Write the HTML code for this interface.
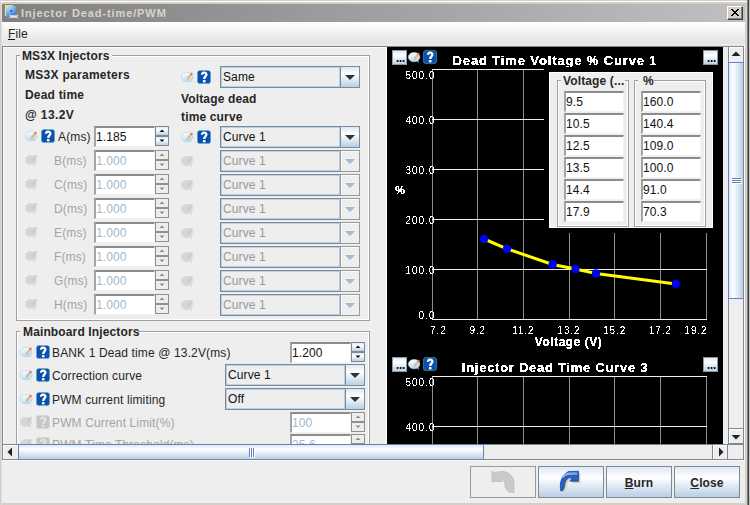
<!DOCTYPE html><html><head><meta charset="utf-8"><style>
*{box-sizing:border-box;margin:0;padding:0}
html,body{width:750px;height:505px;overflow:hidden;background:#d4d0c8;font-family:"Liberation Sans",sans-serif;position:relative}
.a{position:absolute}
.t{position:absolute;font-size:12px;line-height:14px;white-space:nowrap;color:#262626;letter-spacing:0.13px}
.b{font-weight:bold}
.fld{position:absolute;background:#fff;border-top:2px solid #8c8c8c;border-left:2px solid #a4a4a4;border-bottom:1px solid #f2f2f2;border-right:1px solid #f2f2f2;height:21px;width:61px}
.fld span{position:absolute;left:0px;top:2px;letter-spacing:0.1px;font-size:12px;line-height:14px;color:#111}
.fld.d span{color:#a3b8cc}
.spb{position:absolute;width:14px;height:10px;border:1px solid #7a8a99;background:linear-gradient(#dde8f3,#ffffff 35%,#b8cfe5)}
.spb.d{border-color:#909090;background:#eeeeee}
.cmb{position:absolute;width:140px;height:22px}
.cmb .in{position:absolute;left:0;top:0;width:121px;height:22px;border:1px solid #7a8a99;box-shadow:inset 0 0 0 1px #b8cfe5;background:#eeeeee}
.cmb .bt{position:absolute;left:120px;top:0;width:20px;height:22px;border:1px solid #7a8a99;background:linear-gradient(#dde8f3,#ffffff 35%,#b8cfe5)}
.cmb span{position:absolute;left:3px;top:4px;font-size:12px;line-height:14px;color:#111;letter-spacing:0.1px}
.cmb.d .bt{border-color:#999999;background:#eeeeee;box-shadow:inset 1px 1px 0 #fafafa}
.cmb.d span{color:#999}
.grp{position:absolute;border:1px solid #a0a0a0}
.grp:after{content:"";position:absolute;left:0;top:0;right:0;bottom:0;border:1px solid #fff}
.btnb{position:absolute;top:466px;width:66px;height:32px;border:1px solid #7a8a99;background:linear-gradient(#dde8f3,#ffffff 35%,#b8cfe5)}
.ct{position:absolute;font-size:10px;line-height:12px;white-space:nowrap;color:#fff}
</style></head><body>
<div class="a" style="left:0;top:1px;width:747px;height:1px;background:#fff"></div>
<div class="a" style="left:1px;top:2px;width:1px;height:503px;background:#e0ddd6"></div>
<div class="a" style="left:747px;top:0;width:1px;height:505px;background:#808080"></div>
<div class="a" style="left:748px;top:0;width:1px;height:505px;background:#404040"></div>
<div class="a" style="left:749px;top:0;width:1px;height:505px;background:#c4c4c4"></div>
<div class="a" style="left:2px;top:4px;width:743px;height:18px;background:linear-gradient(to right,#808080,#c0c0c0)"></div>
<svg class="a" style="left:4px;top:4px" width="17" height="17" viewBox="0 0 17 17">
<defs><linearGradient id="gic" x1="0" y1="0" x2="0.6" y2="1"><stop offset="0" stop-color="#d8ecfc"/><stop offset="0.5" stop-color="#7ab4ec"/><stop offset="1" stop-color="#2a78d8"/></linearGradient></defs>
<path d="M1.5 12 L1.5 1.5 L9 1.5" fill="none" stroke="#f0dc98" stroke-width="1.2"/>
<rect x="2.2" y="2.2" width="9.5" height="11" fill="url(#gic)"/>
<rect x="6.4" y="6" width="1.6" height="1.8" fill="#1a5cb8"/>
<path d="M6 11.8 L13 11.8 M6 13.2 L13 13.2" stroke="#e8e8e8" stroke-width="1.3"/>
<path d="M5.5 10.6 L6.3 12.5 L5.5 14.5 M14 10.6 L13.2 12.5 L14 14.5" stroke="#c8c8c8" stroke-width="1.1" fill="none"/>
</svg>
<div class="t b" style="left:21px;top:6px;font-size:11px;color:#d8d4cc;letter-spacing:0.9px">Injector Dead-time/PWM</div>
<div class="a" style="left:727px;top:6px;width:16px;height:14px;background:#d4d0c8;border-top:1px solid #fff;border-left:1px solid #fff;border-right:1px solid #404040;border-bottom:1px solid #404040"></div>
<div class="a" style="left:728px;top:7px;width:14px;height:12px;border-right:1px solid #808080;border-bottom:1px solid #808080"></div>
<svg class="a" style="left:731px;top:9px" width="8" height="7" viewBox="0 0 8 7" shape-rendering="crispEdges" fill="#000"><rect x="0" y="0" width="1" height="1"/><rect x="1" y="0" width="1" height="1"/><rect x="6" y="0" width="1" height="1"/><rect x="7" y="0" width="1" height="1"/><rect x="1" y="1" width="1" height="1"/><rect x="2" y="1" width="1" height="1"/><rect x="5" y="1" width="1" height="1"/><rect x="6" y="1" width="1" height="1"/><rect x="2" y="2" width="1" height="1"/><rect x="3" y="2" width="1" height="1"/><rect x="4" y="2" width="1" height="1"/><rect x="5" y="2" width="1" height="1"/><rect x="3" y="3" width="1" height="1"/><rect x="4" y="3" width="1" height="1"/><rect x="2" y="4" width="1" height="1"/><rect x="3" y="4" width="1" height="1"/><rect x="4" y="4" width="1" height="1"/><rect x="5" y="4" width="1" height="1"/><rect x="1" y="5" width="1" height="1"/><rect x="2" y="5" width="1" height="1"/><rect x="5" y="5" width="1" height="1"/><rect x="6" y="5" width="1" height="1"/><rect x="0" y="6" width="1" height="1"/><rect x="1" y="6" width="1" height="1"/><rect x="6" y="6" width="1" height="1"/><rect x="7" y="6" width="1" height="1"/></svg>
<div class="a" style="left:2px;top:22px;width:743px;height:22px;background:linear-gradient(#ffffff,#e2e2e2)"></div>
<div class="t" style="left:8px;top:27px">File</div>
<div class="a" style="left:8px;top:39px;width:7px;height:1px;background:#111"></div>
<div class="a" style="left:2px;top:44px;width:743px;height:459px;background:#eeeeee"></div>
<div class="a" style="left:2px;top:46px;width:743px;height:1px;background:#7a8a99"></div>
<div class="a" style="left:2px;top:45px;width:743px;height:1px;background:#e6e4e0"></div>
<div class="a" style="left:2px;top:46px;width:1px;height:414px;background:#7a8a99"></div>
<div class="a" style="left:3px;top:47px;width:383px;height:1px;background:#f8f8f8"></div>
<div class="a" style="left:3px;top:47px;width:1px;height:397px;background:#f8f8f8"></div>
<div class="a" style="left:2px;top:459px;width:742px;height:1px;background:#7a8a99"></div>
<div class="a" style="left:3px;top:460px;width:742px;height:1px;background:#f8f8f8"></div>
<div class="a" style="left:744px;top:45px;width:1px;height:415px;background:#f8f8f8"></div>
<div class="a" style="left:3px;top:47px;width:725px;height:397px;overflow:hidden"><div class="a" style="left:-3px;top:-47px;width:750px;height:505px">
<div class="grp" style="left:16px;top:55px;width:354px;height:266px"></div>
<div class="a" style="left:20px;top:50px;width:92px;height:12px;background:#eeeeee"></div>
<div class="t b" style="left:22px;top:49px;letter-spacing:0.1px">MS3X Injectors</div>
<div class="t b" style="left:25px;top:68px;letter-spacing:0.28px">MS3X parameters</div>
<div class="t b" style="left:25px;top:88px;letter-spacing:0.2px">Dead time</div>
<div class="t b" style="left:25px;top:108px;letter-spacing:0.4px">@ 13.2V</div>
<svg class="a" style="left:181px;top:71px" width="13" height="13" viewBox="0 0 13 13"><defs><linearGradient id="gb" x1="0.2" y1="0" x2="0.6" y2="1"><stop offset="0" stop-color="#ffffff"/><stop offset="1" stop-color="#b4daf0"/></linearGradient></defs><ellipse cx="6.1" cy="6.1" rx="5.8" ry="4.7" fill="url(#gb)" stroke="#a4d0ea" stroke-width="0.6"/><path d="M8.3 9.5 L10.9 11.9 L10.1 8.8 Z" fill="#b8dcf0"/><path d="M6.6 7.9 L9.8 3.9" stroke="#f2b455" stroke-width="2"/><path d="M9.8 3.9 L11.2 2.1" stroke="#e86878" stroke-width="2"/><path d="M6.7 7.8 L5.9 8.8" stroke="#a0a8b0" stroke-width="1"/></svg>
<svg class="a" style="left:197px;top:70px" width="14" height="14" viewBox="0 0 14 14"><rect x="0.4" y="0.4" width="13.2" height="13.2" rx="2.6" fill="#0a50ac" stroke="#5ab8c8" stroke-width="0.5"/><path d="M5 4.8 C5 2.2 9.4 1.9 9.4 4.5 C9.4 6.4 7.2 6.5 7.2 9" fill="none" stroke="#ffffff" stroke-width="2.3"/><rect x="5.9" y="10.1" width="2.6" height="2.3" fill="#ffffff"/></svg>
<div class="cmb" style="left:220px;top:66px"><div class="in"></div><div class="bt"></div><span>Same</span></div>
<svg class="a" style="left:345px;top:75px" width="10" height="5" viewBox="0 0 10 5"><path d="M0 0 L10 0 L5 5 Z" fill="#333"/></svg>
<div class="t b" style="left:181px;top:92px;letter-spacing:0.15px">Voltage dead</div>
<div class="t b" style="left:181px;top:110px;letter-spacing:0.15px">time curve</div>
<svg class="a" style="left:25px;top:130px" width="13" height="13" viewBox="0 0 13 13"><defs><linearGradient id="gb" x1="0.2" y1="0" x2="0.6" y2="1"><stop offset="0" stop-color="#ffffff"/><stop offset="1" stop-color="#b4daf0"/></linearGradient></defs><ellipse cx="6.1" cy="6.1" rx="5.8" ry="4.7" fill="url(#gb)" stroke="#a4d0ea" stroke-width="0.6"/><path d="M8.3 9.5 L10.9 11.9 L10.1 8.8 Z" fill="#b8dcf0"/><path d="M6.6 7.9 L9.8 3.9" stroke="#f2b455" stroke-width="2"/><path d="M9.8 3.9 L11.2 2.1" stroke="#e86878" stroke-width="2"/><path d="M6.7 7.8 L5.9 8.8" stroke="#a0a8b0" stroke-width="1"/></svg>
<svg class="a" style="left:41px;top:129px" width="14" height="14" viewBox="0 0 14 14"><rect x="0.4" y="0.4" width="13.2" height="13.2" rx="2.6" fill="#0a50ac" stroke="#5ab8c8" stroke-width="0.5"/><path d="M5 4.8 C5 2.2 9.4 1.9 9.4 4.5 C9.4 6.4 7.2 6.5 7.2 9" fill="none" stroke="#ffffff" stroke-width="2.3"/><rect x="5.9" y="10.1" width="2.6" height="2.3" fill="#ffffff"/></svg>
<div class="t" style="left:58px;top:130px;color:#262626">A(ms)</div>
<div class="fld" style="left:94px;top:126px;width:61px"><span>1.185</span></div>
<div class="spb" style="left:155px;top:126px"></div>
<div class="spb" style="left:155px;top:136px"></div>
<svg class="a" style="left:155px;top:126px" width="14" height="20" viewBox="0 0 14 20"><path d="M4.5 6 L7 3.5 L9.5 6 Z" fill="#111"/><path d="M4.5 13.5 L9.5 13.5 L7 16 Z" fill="#111"/></svg>
<svg class="a" style="left:181px;top:131px" width="13" height="13" viewBox="0 0 13 13"><defs><linearGradient id="gb" x1="0.2" y1="0" x2="0.6" y2="1"><stop offset="0" stop-color="#ffffff"/><stop offset="1" stop-color="#b4daf0"/></linearGradient></defs><ellipse cx="6.1" cy="6.1" rx="5.8" ry="4.7" fill="url(#gb)" stroke="#a4d0ea" stroke-width="0.6"/><path d="M8.3 9.5 L10.9 11.9 L10.1 8.8 Z" fill="#b8dcf0"/><path d="M6.6 7.9 L9.8 3.9" stroke="#f2b455" stroke-width="2"/><path d="M9.8 3.9 L11.2 2.1" stroke="#e86878" stroke-width="2"/><path d="M6.7 7.8 L5.9 8.8" stroke="#a0a8b0" stroke-width="1"/></svg>
<svg class="a" style="left:197px;top:130px" width="14" height="14" viewBox="0 0 14 14"><rect x="0.4" y="0.4" width="13.2" height="13.2" rx="2.6" fill="#0a50ac" stroke="#5ab8c8" stroke-width="0.5"/><path d="M5 4.8 C5 2.2 9.4 1.9 9.4 4.5 C9.4 6.4 7.2 6.5 7.2 9" fill="none" stroke="#ffffff" stroke-width="2.3"/><rect x="5.9" y="10.1" width="2.6" height="2.3" fill="#ffffff"/></svg>
<div class="cmb" style="left:220px;top:126px"><div class="in"></div><div class="bt"></div><span>Curve 1</span></div>
<svg class="a" style="left:345px;top:135px" width="10" height="5" viewBox="0 0 10 5"><path d="M0 0 L10 0 L5 5 Z" fill="#333"/></svg>
<svg class="a" style="left:25px;top:154px" width="13" height="13" viewBox="0 0 13 13"><ellipse cx="6" cy="6" rx="5.8" ry="5" fill="#d6d6d6"/><path d="M8.3 9.6 L11 12 L10.2 8.6 Z" fill="#d4d4d4"/><path d="M7 6.8 L10.2 2.9" stroke="#cbcbcb" stroke-width="2"/><path d="M10 3.1 L11.6 1.3" stroke="#d0d0d0" stroke-width="2.2"/></svg>
<div class="t" style="left:54px;top:154px;color:#a4a4a4">B(ms)</div>
<div class="fld d" style="left:94px;top:150px;width:61px"><span>1.000</span></div>
<div class="spb d" style="left:155px;top:150px"></div>
<div class="spb d" style="left:155px;top:160px"></div>
<svg class="a" style="left:155px;top:150px" width="14" height="20" viewBox="0 0 14 20"><path d="M4.5 6 L7 3.5 L9.5 6 Z" fill="#8a8a8a"/><path d="M4.5 13.5 L9.5 13.5 L7 16 Z" fill="#8a8a8a"/></svg>
<svg class="a" style="left:181px;top:155px" width="13" height="13" viewBox="0 0 13 13"><ellipse cx="6" cy="6" rx="5.8" ry="5" fill="#d6d6d6"/><path d="M8.3 9.6 L11 12 L10.2 8.6 Z" fill="#d4d4d4"/><path d="M7 6.8 L10.2 2.9" stroke="#cbcbcb" stroke-width="2"/><path d="M10 3.1 L11.6 1.3" stroke="#d0d0d0" stroke-width="2.2"/></svg>
<div class="cmb d" style="left:220px;top:150px"><div class="in"></div><div class="bt"></div><span>Curve 1</span></div>
<svg class="a" style="left:345px;top:159px" width="10" height="5" viewBox="0 0 10 5"><path d="M0 0 L10 0 L5 5 Z" fill="#a3b8cc"/></svg>
<svg class="a" style="left:25px;top:178px" width="13" height="13" viewBox="0 0 13 13"><ellipse cx="6" cy="6" rx="5.8" ry="5" fill="#d6d6d6"/><path d="M8.3 9.6 L11 12 L10.2 8.6 Z" fill="#d4d4d4"/><path d="M7 6.8 L10.2 2.9" stroke="#cbcbcb" stroke-width="2"/><path d="M10 3.1 L11.6 1.3" stroke="#d0d0d0" stroke-width="2.2"/></svg>
<div class="t" style="left:54px;top:178px;color:#a4a4a4">C(ms)</div>
<div class="fld d" style="left:94px;top:174px;width:61px"><span>1.000</span></div>
<div class="spb d" style="left:155px;top:174px"></div>
<div class="spb d" style="left:155px;top:184px"></div>
<svg class="a" style="left:155px;top:174px" width="14" height="20" viewBox="0 0 14 20"><path d="M4.5 6 L7 3.5 L9.5 6 Z" fill="#8a8a8a"/><path d="M4.5 13.5 L9.5 13.5 L7 16 Z" fill="#8a8a8a"/></svg>
<svg class="a" style="left:181px;top:179px" width="13" height="13" viewBox="0 0 13 13"><ellipse cx="6" cy="6" rx="5.8" ry="5" fill="#d6d6d6"/><path d="M8.3 9.6 L11 12 L10.2 8.6 Z" fill="#d4d4d4"/><path d="M7 6.8 L10.2 2.9" stroke="#cbcbcb" stroke-width="2"/><path d="M10 3.1 L11.6 1.3" stroke="#d0d0d0" stroke-width="2.2"/></svg>
<div class="cmb d" style="left:220px;top:174px"><div class="in"></div><div class="bt"></div><span>Curve 1</span></div>
<svg class="a" style="left:345px;top:183px" width="10" height="5" viewBox="0 0 10 5"><path d="M0 0 L10 0 L5 5 Z" fill="#a3b8cc"/></svg>
<svg class="a" style="left:25px;top:202px" width="13" height="13" viewBox="0 0 13 13"><ellipse cx="6" cy="6" rx="5.8" ry="5" fill="#d6d6d6"/><path d="M8.3 9.6 L11 12 L10.2 8.6 Z" fill="#d4d4d4"/><path d="M7 6.8 L10.2 2.9" stroke="#cbcbcb" stroke-width="2"/><path d="M10 3.1 L11.6 1.3" stroke="#d0d0d0" stroke-width="2.2"/></svg>
<div class="t" style="left:54px;top:202px;color:#a4a4a4">D(ms)</div>
<div class="fld d" style="left:94px;top:198px;width:61px"><span>1.000</span></div>
<div class="spb d" style="left:155px;top:198px"></div>
<div class="spb d" style="left:155px;top:208px"></div>
<svg class="a" style="left:155px;top:198px" width="14" height="20" viewBox="0 0 14 20"><path d="M4.5 6 L7 3.5 L9.5 6 Z" fill="#8a8a8a"/><path d="M4.5 13.5 L9.5 13.5 L7 16 Z" fill="#8a8a8a"/></svg>
<svg class="a" style="left:181px;top:203px" width="13" height="13" viewBox="0 0 13 13"><ellipse cx="6" cy="6" rx="5.8" ry="5" fill="#d6d6d6"/><path d="M8.3 9.6 L11 12 L10.2 8.6 Z" fill="#d4d4d4"/><path d="M7 6.8 L10.2 2.9" stroke="#cbcbcb" stroke-width="2"/><path d="M10 3.1 L11.6 1.3" stroke="#d0d0d0" stroke-width="2.2"/></svg>
<div class="cmb d" style="left:220px;top:198px"><div class="in"></div><div class="bt"></div><span>Curve 1</span></div>
<svg class="a" style="left:345px;top:207px" width="10" height="5" viewBox="0 0 10 5"><path d="M0 0 L10 0 L5 5 Z" fill="#a3b8cc"/></svg>
<svg class="a" style="left:25px;top:226px" width="13" height="13" viewBox="0 0 13 13"><ellipse cx="6" cy="6" rx="5.8" ry="5" fill="#d6d6d6"/><path d="M8.3 9.6 L11 12 L10.2 8.6 Z" fill="#d4d4d4"/><path d="M7 6.8 L10.2 2.9" stroke="#cbcbcb" stroke-width="2"/><path d="M10 3.1 L11.6 1.3" stroke="#d0d0d0" stroke-width="2.2"/></svg>
<div class="t" style="left:54px;top:226px;color:#a4a4a4">E(ms)</div>
<div class="fld d" style="left:94px;top:222px;width:61px"><span>1.000</span></div>
<div class="spb d" style="left:155px;top:222px"></div>
<div class="spb d" style="left:155px;top:232px"></div>
<svg class="a" style="left:155px;top:222px" width="14" height="20" viewBox="0 0 14 20"><path d="M4.5 6 L7 3.5 L9.5 6 Z" fill="#8a8a8a"/><path d="M4.5 13.5 L9.5 13.5 L7 16 Z" fill="#8a8a8a"/></svg>
<svg class="a" style="left:181px;top:227px" width="13" height="13" viewBox="0 0 13 13"><ellipse cx="6" cy="6" rx="5.8" ry="5" fill="#d6d6d6"/><path d="M8.3 9.6 L11 12 L10.2 8.6 Z" fill="#d4d4d4"/><path d="M7 6.8 L10.2 2.9" stroke="#cbcbcb" stroke-width="2"/><path d="M10 3.1 L11.6 1.3" stroke="#d0d0d0" stroke-width="2.2"/></svg>
<div class="cmb d" style="left:220px;top:222px"><div class="in"></div><div class="bt"></div><span>Curve 1</span></div>
<svg class="a" style="left:345px;top:231px" width="10" height="5" viewBox="0 0 10 5"><path d="M0 0 L10 0 L5 5 Z" fill="#a3b8cc"/></svg>
<svg class="a" style="left:25px;top:250px" width="13" height="13" viewBox="0 0 13 13"><ellipse cx="6" cy="6" rx="5.8" ry="5" fill="#d6d6d6"/><path d="M8.3 9.6 L11 12 L10.2 8.6 Z" fill="#d4d4d4"/><path d="M7 6.8 L10.2 2.9" stroke="#cbcbcb" stroke-width="2"/><path d="M10 3.1 L11.6 1.3" stroke="#d0d0d0" stroke-width="2.2"/></svg>
<div class="t" style="left:54px;top:250px;color:#a4a4a4">F(ms)</div>
<div class="fld d" style="left:94px;top:246px;width:61px"><span>1.000</span></div>
<div class="spb d" style="left:155px;top:246px"></div>
<div class="spb d" style="left:155px;top:256px"></div>
<svg class="a" style="left:155px;top:246px" width="14" height="20" viewBox="0 0 14 20"><path d="M4.5 6 L7 3.5 L9.5 6 Z" fill="#8a8a8a"/><path d="M4.5 13.5 L9.5 13.5 L7 16 Z" fill="#8a8a8a"/></svg>
<svg class="a" style="left:181px;top:251px" width="13" height="13" viewBox="0 0 13 13"><ellipse cx="6" cy="6" rx="5.8" ry="5" fill="#d6d6d6"/><path d="M8.3 9.6 L11 12 L10.2 8.6 Z" fill="#d4d4d4"/><path d="M7 6.8 L10.2 2.9" stroke="#cbcbcb" stroke-width="2"/><path d="M10 3.1 L11.6 1.3" stroke="#d0d0d0" stroke-width="2.2"/></svg>
<div class="cmb d" style="left:220px;top:246px"><div class="in"></div><div class="bt"></div><span>Curve 1</span></div>
<svg class="a" style="left:345px;top:255px" width="10" height="5" viewBox="0 0 10 5"><path d="M0 0 L10 0 L5 5 Z" fill="#a3b8cc"/></svg>
<svg class="a" style="left:25px;top:274px" width="13" height="13" viewBox="0 0 13 13"><ellipse cx="6" cy="6" rx="5.8" ry="5" fill="#d6d6d6"/><path d="M8.3 9.6 L11 12 L10.2 8.6 Z" fill="#d4d4d4"/><path d="M7 6.8 L10.2 2.9" stroke="#cbcbcb" stroke-width="2"/><path d="M10 3.1 L11.6 1.3" stroke="#d0d0d0" stroke-width="2.2"/></svg>
<div class="t" style="left:54px;top:274px;color:#a4a4a4">G(ms)</div>
<div class="fld d" style="left:94px;top:270px;width:61px"><span>1.000</span></div>
<div class="spb d" style="left:155px;top:270px"></div>
<div class="spb d" style="left:155px;top:280px"></div>
<svg class="a" style="left:155px;top:270px" width="14" height="20" viewBox="0 0 14 20"><path d="M4.5 6 L7 3.5 L9.5 6 Z" fill="#8a8a8a"/><path d="M4.5 13.5 L9.5 13.5 L7 16 Z" fill="#8a8a8a"/></svg>
<svg class="a" style="left:181px;top:275px" width="13" height="13" viewBox="0 0 13 13"><ellipse cx="6" cy="6" rx="5.8" ry="5" fill="#d6d6d6"/><path d="M8.3 9.6 L11 12 L10.2 8.6 Z" fill="#d4d4d4"/><path d="M7 6.8 L10.2 2.9" stroke="#cbcbcb" stroke-width="2"/><path d="M10 3.1 L11.6 1.3" stroke="#d0d0d0" stroke-width="2.2"/></svg>
<div class="cmb d" style="left:220px;top:270px"><div class="in"></div><div class="bt"></div><span>Curve 1</span></div>
<svg class="a" style="left:345px;top:279px" width="10" height="5" viewBox="0 0 10 5"><path d="M0 0 L10 0 L5 5 Z" fill="#a3b8cc"/></svg>
<svg class="a" style="left:25px;top:298px" width="13" height="13" viewBox="0 0 13 13"><ellipse cx="6" cy="6" rx="5.8" ry="5" fill="#d6d6d6"/><path d="M8.3 9.6 L11 12 L10.2 8.6 Z" fill="#d4d4d4"/><path d="M7 6.8 L10.2 2.9" stroke="#cbcbcb" stroke-width="2"/><path d="M10 3.1 L11.6 1.3" stroke="#d0d0d0" stroke-width="2.2"/></svg>
<div class="t" style="left:54px;top:298px;color:#a4a4a4">H(ms)</div>
<div class="fld d" style="left:94px;top:294px;width:61px"><span>1.000</span></div>
<div class="spb d" style="left:155px;top:294px"></div>
<div class="spb d" style="left:155px;top:304px"></div>
<svg class="a" style="left:155px;top:294px" width="14" height="20" viewBox="0 0 14 20"><path d="M4.5 6 L7 3.5 L9.5 6 Z" fill="#8a8a8a"/><path d="M4.5 13.5 L9.5 13.5 L7 16 Z" fill="#8a8a8a"/></svg>
<svg class="a" style="left:181px;top:299px" width="13" height="13" viewBox="0 0 13 13"><ellipse cx="6" cy="6" rx="5.8" ry="5" fill="#d6d6d6"/><path d="M8.3 9.6 L11 12 L10.2 8.6 Z" fill="#d4d4d4"/><path d="M7 6.8 L10.2 2.9" stroke="#cbcbcb" stroke-width="2"/><path d="M10 3.1 L11.6 1.3" stroke="#d0d0d0" stroke-width="2.2"/></svg>
<div class="cmb d" style="left:220px;top:294px"><div class="in"></div><div class="bt"></div><span>Curve 1</span></div>
<svg class="a" style="left:345px;top:303px" width="10" height="5" viewBox="0 0 10 5"><path d="M0 0 L10 0 L5 5 Z" fill="#a3b8cc"/></svg>
<div class="grp" style="left:16px;top:331px;width:354px;height:140px"></div>
<div class="a" style="left:20px;top:326px;width:118px;height:12px;background:#eeeeee"></div>
<div class="t b" style="left:23px;top:325px;">Mainboard Injectors</div>
<svg class="a" style="left:20px;top:346px" width="13" height="13" viewBox="0 0 13 13"><defs><linearGradient id="gb" x1="0.2" y1="0" x2="0.6" y2="1"><stop offset="0" stop-color="#ffffff"/><stop offset="1" stop-color="#b4daf0"/></linearGradient></defs><ellipse cx="6.1" cy="6.1" rx="5.8" ry="4.7" fill="url(#gb)" stroke="#a4d0ea" stroke-width="0.6"/><path d="M8.3 9.5 L10.9 11.9 L10.1 8.8 Z" fill="#b8dcf0"/><path d="M6.6 7.9 L9.8 3.9" stroke="#f2b455" stroke-width="2"/><path d="M9.8 3.9 L11.2 2.1" stroke="#e86878" stroke-width="2"/><path d="M6.7 7.8 L5.9 8.8" stroke="#a0a8b0" stroke-width="1"/></svg>
<svg class="a" style="left:36px;top:345px" width="14" height="14" viewBox="0 0 14 14"><rect x="0.4" y="0.4" width="13.2" height="13.2" rx="2.6" fill="#0a50ac" stroke="#5ab8c8" stroke-width="0.5"/><path d="M5 4.8 C5 2.2 9.4 1.9 9.4 4.5 C9.4 6.4 7.2 6.5 7.2 9" fill="none" stroke="#ffffff" stroke-width="2.3"/><rect x="5.9" y="10.1" width="2.6" height="2.3" fill="#ffffff"/></svg>
<div class="t " style="left:52px;top:346px;">BANK 1 Dead time @ 13.2V(ms)</div>
<div class="fld" style="left:290px;top:342px;width:61px"><span>1.200</span></div>
<div class="spb" style="left:351px;top:342px"></div>
<div class="spb" style="left:351px;top:352px"></div>
<svg class="a" style="left:351px;top:342px" width="14" height="20" viewBox="0 0 14 20"><path d="M4.5 6 L7 3.5 L9.5 6 Z" fill="#111"/><path d="M4.5 13.5 L9.5 13.5 L7 16 Z" fill="#111"/></svg>
<svg class="a" style="left:20px;top:369px" width="13" height="13" viewBox="0 0 13 13"><defs><linearGradient id="gb" x1="0.2" y1="0" x2="0.6" y2="1"><stop offset="0" stop-color="#ffffff"/><stop offset="1" stop-color="#b4daf0"/></linearGradient></defs><ellipse cx="6.1" cy="6.1" rx="5.8" ry="4.7" fill="url(#gb)" stroke="#a4d0ea" stroke-width="0.6"/><path d="M8.3 9.5 L10.9 11.9 L10.1 8.8 Z" fill="#b8dcf0"/><path d="M6.6 7.9 L9.8 3.9" stroke="#f2b455" stroke-width="2"/><path d="M9.8 3.9 L11.2 2.1" stroke="#e86878" stroke-width="2"/><path d="M6.7 7.8 L5.9 8.8" stroke="#a0a8b0" stroke-width="1"/></svg>
<svg class="a" style="left:36px;top:368px" width="14" height="14" viewBox="0 0 14 14"><rect x="0.4" y="0.4" width="13.2" height="13.2" rx="2.6" fill="#0a50ac" stroke="#5ab8c8" stroke-width="0.5"/><path d="M5 4.8 C5 2.2 9.4 1.9 9.4 4.5 C9.4 6.4 7.2 6.5 7.2 9" fill="none" stroke="#ffffff" stroke-width="2.3"/><rect x="5.9" y="10.1" width="2.6" height="2.3" fill="#ffffff"/></svg>
<div class="t " style="left:52px;top:369px;">Correction curve</div>
<div class="cmb" style="left:225px;top:364px"><div class="in"></div><div class="bt"></div><span>Curve 1</span></div>
<svg class="a" style="left:350px;top:373px" width="10" height="5" viewBox="0 0 10 5"><path d="M0 0 L10 0 L5 5 Z" fill="#333"/></svg>
<svg class="a" style="left:20px;top:393px" width="13" height="13" viewBox="0 0 13 13"><defs><linearGradient id="gb" x1="0.2" y1="0" x2="0.6" y2="1"><stop offset="0" stop-color="#ffffff"/><stop offset="1" stop-color="#b4daf0"/></linearGradient></defs><ellipse cx="6.1" cy="6.1" rx="5.8" ry="4.7" fill="url(#gb)" stroke="#a4d0ea" stroke-width="0.6"/><path d="M8.3 9.5 L10.9 11.9 L10.1 8.8 Z" fill="#b8dcf0"/><path d="M6.6 7.9 L9.8 3.9" stroke="#f2b455" stroke-width="2"/><path d="M9.8 3.9 L11.2 2.1" stroke="#e86878" stroke-width="2"/><path d="M6.7 7.8 L5.9 8.8" stroke="#a0a8b0" stroke-width="1"/></svg>
<svg class="a" style="left:36px;top:392px" width="14" height="14" viewBox="0 0 14 14"><rect x="0.4" y="0.4" width="13.2" height="13.2" rx="2.6" fill="#0a50ac" stroke="#5ab8c8" stroke-width="0.5"/><path d="M5 4.8 C5 2.2 9.4 1.9 9.4 4.5 C9.4 6.4 7.2 6.5 7.2 9" fill="none" stroke="#ffffff" stroke-width="2.3"/><rect x="5.9" y="10.1" width="2.6" height="2.3" fill="#ffffff"/></svg>
<div class="t " style="left:52px;top:393px;">PWM current limiting</div>
<div class="cmb" style="left:225px;top:388px"><div class="in"></div><div class="bt"></div><span>Off</span></div>
<svg class="a" style="left:350px;top:397px" width="10" height="5" viewBox="0 0 10 5"><path d="M0 0 L10 0 L5 5 Z" fill="#333"/></svg>
<svg class="a" style="left:20px;top:416px" width="13" height="13" viewBox="0 0 13 13"><ellipse cx="6" cy="6" rx="5.8" ry="5" fill="#d6d6d6"/><path d="M8.3 9.6 L11 12 L10.2 8.6 Z" fill="#d4d4d4"/><path d="M7 6.8 L10.2 2.9" stroke="#cbcbcb" stroke-width="2"/><path d="M10 3.1 L11.6 1.3" stroke="#d0d0d0" stroke-width="2.2"/></svg>
<svg class="a" style="left:36px;top:415px" width="14" height="14" viewBox="0 0 14 14"><rect x="0.4" y="0.4" width="13.2" height="13.2" rx="2.6" fill="#c6c6c6" stroke="#d4d4d4" stroke-width="0.5"/><path d="M5 4.8 C5 2.2 9.4 1.9 9.4 4.5 C9.4 6.4 7.2 6.5 7.2 9" fill="none" stroke="#e4e4e4" stroke-width="2.3"/><rect x="5.9" y="10.1" width="2.6" height="2.3" fill="#e4e4e4"/></svg>
<div class="t " style="left:52px;top:416px;color:#a4a4a4">PWM Current Limit(%)</div>
<div class="fld d" style="left:290px;top:412px;width:61px"><span>100</span></div>
<div class="spb d" style="left:351px;top:412px"></div>
<div class="spb d" style="left:351px;top:422px"></div>
<svg class="a" style="left:351px;top:412px" width="14" height="20" viewBox="0 0 14 20"><path d="M4.5 6 L7 3.5 L9.5 6 Z" fill="#8a8a8a"/><path d="M4.5 13.5 L9.5 13.5 L7 16 Z" fill="#8a8a8a"/></svg>
<svg class="a" style="left:20px;top:438px" width="13" height="13" viewBox="0 0 13 13"><ellipse cx="6" cy="6" rx="5.8" ry="5" fill="#d6d6d6"/><path d="M8.3 9.6 L11 12 L10.2 8.6 Z" fill="#d4d4d4"/><path d="M7 6.8 L10.2 2.9" stroke="#cbcbcb" stroke-width="2"/><path d="M10 3.1 L11.6 1.3" stroke="#d0d0d0" stroke-width="2.2"/></svg>
<svg class="a" style="left:36px;top:437px" width="14" height="14" viewBox="0 0 14 14"><rect x="0.4" y="0.4" width="13.2" height="13.2" rx="2.6" fill="#c6c6c6" stroke="#d4d4d4" stroke-width="0.5"/><path d="M5 4.8 C5 2.2 9.4 1.9 9.4 4.5 C9.4 6.4 7.2 6.5 7.2 9" fill="none" stroke="#e4e4e4" stroke-width="2.3"/><rect x="5.9" y="10.1" width="2.6" height="2.3" fill="#e4e4e4"/></svg>
<div class="t " style="left:52px;top:438px;color:#a4a4a4">PWM Time Threshold(ms)</div>
<div class="fld d" style="left:290px;top:434px;width:61px"><span>25.6</span></div>
<div class="spb d" style="left:351px;top:434px"></div>
<div class="spb d" style="left:351px;top:444px"></div>
<svg class="a" style="left:351px;top:434px" width="14" height="20" viewBox="0 0 14 20"><path d="M4.5 6 L7 3.5 L9.5 6 Z" fill="#8a8a8a"/><path d="M4.5 13.5 L9.5 13.5 L7 16 Z" fill="#8a8a8a"/></svg>
<div class="a" style="left:386px;top:47px;width:1px;height:397px;background:#fff"></div>
</div></div>
<svg class="a" style="left:387px;top:47px" width="336" height="397" viewBox="387 47 336 397"><defs><filter id="crisp" x="0" y="0" width="1" height="1"><feComponentTransfer><feFuncA type="discrete" tableValues="0 1 1"/></feComponentTransfer></filter><filter id="crisp2" x="0" y="0" width="1" height="1"><feComponentTransfer><feFuncA type="discrete" tableValues="0 1"/></feComponentTransfer></filter></defs><defs><linearGradient id="gbtn" x1="0" y1="0" x2="0" y2="1"><stop offset="0" stop-color="#dde8f3"/><stop offset="0.35" stop-color="#fff"/><stop offset="1" stop-color="#b8cfe5"/></linearGradient></defs><rect x="387" y="47" width="336" height="397" fill="#000"/><rect x="392.5" y="50.5" width="14" height="14" fill="url(#gbtn)" stroke="#8a9aa9"/><rect x="396" y="60" width="1" height="2" fill="#d8a050"/><rect x="397" y="60" width="1" height="2" fill="#101010"/><rect x="398" y="60" width="1" height="2" fill="#3c8ce8"/><rect x="399" y="60" width="1" height="2" fill="#d8a050"/><rect x="400" y="60" width="1" height="2" fill="#101010"/><rect x="401" y="60" width="1" height="2" fill="#3c8ce8"/><rect x="402" y="60" width="1" height="2" fill="#d8a050"/><rect x="403" y="60" width="1" height="2" fill="#101010"/><rect x="404" y="60" width="1" height="2" fill="#3c8ce8"/><g transform="translate(408,51)"><defs><linearGradient id="gb" x1="0.2" y1="0" x2="0.6" y2="1"><stop offset="0" stop-color="#ffffff"/><stop offset="1" stop-color="#b4daf0"/></linearGradient></defs><ellipse cx="6.1" cy="6.1" rx="5.8" ry="4.7" fill="url(#gb)" stroke="#a4d0ea" stroke-width="0.6"/><path d="M8.3 9.5 L10.9 11.9 L10.1 8.8 Z" fill="#b8dcf0"/><path d="M6.6 7.9 L9.8 3.9" stroke="#f2b455" stroke-width="2"/><path d="M9.8 3.9 L11.2 2.1" stroke="#e86878" stroke-width="2"/><path d="M6.7 7.8 L5.9 8.8" stroke="#a0a8b0" stroke-width="1"/></g><g transform="translate(423,50)"><rect x="0.4" y="0.4" width="13.2" height="13.2" rx="2.6" fill="#0a50ac" stroke="#5ab8c8" stroke-width="0.5"/><path d="M5 4.8 C5 2.2 9.4 1.9 9.4 4.5 C9.4 6.4 7.2 6.5 7.2 9" fill="none" stroke="#ffffff" stroke-width="2.3"/><rect x="5.9" y="10.1" width="2.6" height="2.3" fill="#ffffff"/></g><rect x="703.5" y="50.5" width="14" height="14" fill="url(#gbtn)" stroke="#8a9aa9"/><rect x="707" y="60" width="1" height="2" fill="#d8a050"/><rect x="708" y="60" width="1" height="2" fill="#101010"/><rect x="709" y="60" width="1" height="2" fill="#3c8ce8"/><rect x="710" y="60" width="1" height="2" fill="#d8a050"/><rect x="711" y="60" width="1" height="2" fill="#101010"/><rect x="712" y="60" width="1" height="2" fill="#3c8ce8"/><rect x="713" y="60" width="1" height="2" fill="#d8a050"/><rect x="714" y="60" width="1" height="2" fill="#101010"/><rect x="715" y="60" width="1" height="2" fill="#3c8ce8"/><text filter="url(#crisp)" x="555" y="65" text-anchor="middle" font-family="Liberation Sans" font-weight="bold" font-size="13" letter-spacing="0.86" fill="#fff">Dead Time Voltage % Curve 1</text><line x1="477.5" y1="69" x2="477.5" y2="319" stroke="#8c8c8c"/><line x1="523.5" y1="69" x2="523.5" y2="319" stroke="#8c8c8c"/><line x1="569.5" y1="69" x2="569.5" y2="319" stroke="#8c8c8c"/><line x1="614.5" y1="69" x2="614.5" y2="319" stroke="#8c8c8c"/><line x1="660.5" y1="69" x2="660.5" y2="319" stroke="#8c8c8c"/><line x1="432.5" y1="69" x2="432.5" y2="319" stroke="#8c8c8c"/><line x1="706.5" y1="69" x2="706.5" y2="319" stroke="#8c8c8c"/><line x1="432" y1="69.5" x2="707" y2="69.5" stroke="#f0f0f0"/><line x1="432" y1="119.5" x2="707" y2="119.5" stroke="#f0f0f0"/><line x1="432" y1="169.5" x2="707" y2="169.5" stroke="#f0f0f0"/><line x1="432" y1="219.5" x2="707" y2="219.5" stroke="#f0f0f0"/><line x1="432" y1="269.5" x2="707" y2="269.5" stroke="#f0f0f0"/><line x1="432" y1="319.5" x2="707" y2="319.5" stroke="#f0f0f0"/><text filter="url(#crisp2)" x="435.5" y="79.0" text-anchor="end" font-family="Liberation Sans" font-size="10" letter-spacing="1.0" fill="#fff">500.0</text><text filter="url(#crisp2)" x="435.5" y="123.5" text-anchor="end" font-family="Liberation Sans" font-size="10" letter-spacing="1.0" fill="#fff">400.0</text><text filter="url(#crisp2)" x="435.5" y="173.5" text-anchor="end" font-family="Liberation Sans" font-size="10" letter-spacing="1.0" fill="#fff">300.0</text><text filter="url(#crisp2)" x="435.5" y="223.5" text-anchor="end" font-family="Liberation Sans" font-size="10" letter-spacing="1.0" fill="#fff">200.0</text><text filter="url(#crisp2)" x="435.5" y="273.5" text-anchor="end" font-family="Liberation Sans" font-size="10" letter-spacing="1.0" fill="#fff">100.0</text><text filter="url(#crisp2)" x="435.5" y="319.0" text-anchor="end" font-family="Liberation Sans" font-size="10" letter-spacing="1.0" fill="#fff">0.0</text><text filter="url(#crisp)" x="395" y="194" font-family="Liberation Sans" font-weight="bold" font-size="11" fill="#fff">%</text><text filter="url(#crisp2)" x="430.0" y="334" text-anchor="start" font-family="Liberation Sans" font-size="10" letter-spacing="0.9" fill="#fff">7.2</text><text filter="url(#crisp2)" x="477.7" y="334" text-anchor="middle" font-family="Liberation Sans" font-size="10" letter-spacing="0.9" fill="#fff">9.2</text><text filter="url(#crisp2)" x="523.3" y="334" text-anchor="middle" font-family="Liberation Sans" font-size="10" letter-spacing="0.9" fill="#fff">11.2</text><text filter="url(#crisp2)" x="569.0" y="334" text-anchor="middle" font-family="Liberation Sans" font-size="10" letter-spacing="0.9" fill="#fff">13.2</text><text filter="url(#crisp2)" x="614.7" y="334" text-anchor="middle" font-family="Liberation Sans" font-size="10" letter-spacing="0.9" fill="#fff">15.2</text><text filter="url(#crisp2)" x="660.3" y="334" text-anchor="middle" font-family="Liberation Sans" font-size="10" letter-spacing="0.9" fill="#fff">17.2</text><text filter="url(#crisp2)" x="707.5" y="334" text-anchor="end" font-family="Liberation Sans" font-size="10" letter-spacing="0.9" fill="#fff">19.2</text><text filter="url(#crisp)" x="568.5" y="346" text-anchor="middle" font-family="Liberation Sans" font-weight="bold" font-size="12" letter-spacing="0.5" fill="#fff">Voltage (V)</text><polyline points="484.1,239.0 507.0,248.8 552.6,264.5 575.5,269.0 596.0,273.5 675.9,283.9" fill="none" stroke="#ffff00" stroke-width="3"/><circle cx="484.1" cy="239.0" r="4.2" fill="#0000ff"/><circle cx="507.0" cy="248.8" r="4.2" fill="#0000ff"/><circle cx="552.6" cy="264.5" r="4.2" fill="#0000ff"/><circle cx="575.5" cy="269.0" r="4.2" fill="#0000ff"/><circle cx="596.0" cy="273.5" r="4.2" fill="#0000ff"/><circle cx="675.9" cy="283.9" r="4.2" fill="#0000ff"/><rect x="392.5" y="357.5" width="14" height="14" fill="url(#gbtn)" stroke="#8a9aa9"/><rect x="396" y="367" width="1" height="2" fill="#d8a050"/><rect x="397" y="367" width="1" height="2" fill="#101010"/><rect x="398" y="367" width="1" height="2" fill="#3c8ce8"/><rect x="399" y="367" width="1" height="2" fill="#d8a050"/><rect x="400" y="367" width="1" height="2" fill="#101010"/><rect x="401" y="367" width="1" height="2" fill="#3c8ce8"/><rect x="402" y="367" width="1" height="2" fill="#d8a050"/><rect x="403" y="367" width="1" height="2" fill="#101010"/><rect x="404" y="367" width="1" height="2" fill="#3c8ce8"/><g transform="translate(408,358)"><defs><linearGradient id="gb" x1="0.2" y1="0" x2="0.6" y2="1"><stop offset="0" stop-color="#ffffff"/><stop offset="1" stop-color="#b4daf0"/></linearGradient></defs><ellipse cx="6.1" cy="6.1" rx="5.8" ry="4.7" fill="url(#gb)" stroke="#a4d0ea" stroke-width="0.6"/><path d="M8.3 9.5 L10.9 11.9 L10.1 8.8 Z" fill="#b8dcf0"/><path d="M6.6 7.9 L9.8 3.9" stroke="#f2b455" stroke-width="2"/><path d="M9.8 3.9 L11.2 2.1" stroke="#e86878" stroke-width="2"/><path d="M6.7 7.8 L5.9 8.8" stroke="#a0a8b0" stroke-width="1"/></g><g transform="translate(423,357)"><rect x="0.4" y="0.4" width="13.2" height="13.2" rx="2.6" fill="#0a50ac" stroke="#5ab8c8" stroke-width="0.5"/><path d="M5 4.8 C5 2.2 9.4 1.9 9.4 4.5 C9.4 6.4 7.2 6.5 7.2 9" fill="none" stroke="#ffffff" stroke-width="2.3"/><rect x="5.9" y="10.1" width="2.6" height="2.3" fill="#ffffff"/></g><rect x="703.5" y="357.5" width="14" height="14" fill="url(#gbtn)" stroke="#8a9aa9"/><rect x="707" y="367" width="1" height="2" fill="#d8a050"/><rect x="708" y="367" width="1" height="2" fill="#101010"/><rect x="709" y="367" width="1" height="2" fill="#3c8ce8"/><rect x="710" y="367" width="1" height="2" fill="#d8a050"/><rect x="711" y="367" width="1" height="2" fill="#101010"/><rect x="712" y="367" width="1" height="2" fill="#3c8ce8"/><rect x="713" y="367" width="1" height="2" fill="#d8a050"/><rect x="714" y="367" width="1" height="2" fill="#101010"/><rect x="715" y="367" width="1" height="2" fill="#3c8ce8"/><text filter="url(#crisp)" x="555" y="372" text-anchor="middle" font-family="Liberation Sans" font-weight="bold" font-size="13" letter-spacing="0.73" fill="#fff">Injector Dead Time Curve 3</text><line x1="477.5" y1="376" x2="477.5" y2="626" stroke="#8c8c8c"/><line x1="523.5" y1="376" x2="523.5" y2="626" stroke="#8c8c8c"/><line x1="569.5" y1="376" x2="569.5" y2="626" stroke="#8c8c8c"/><line x1="614.5" y1="376" x2="614.5" y2="626" stroke="#8c8c8c"/><line x1="660.5" y1="376" x2="660.5" y2="626" stroke="#8c8c8c"/><line x1="432.5" y1="376" x2="432.5" y2="626" stroke="#8c8c8c"/><line x1="706.5" y1="376" x2="706.5" y2="626" stroke="#8c8c8c"/><line x1="432" y1="376.5" x2="707" y2="376.5" stroke="#f0f0f0"/><line x1="432" y1="426.5" x2="707" y2="426.5" stroke="#f0f0f0"/><line x1="432" y1="476.5" x2="707" y2="476.5" stroke="#f0f0f0"/><line x1="432" y1="526.5" x2="707" y2="526.5" stroke="#f0f0f0"/><line x1="432" y1="576.5" x2="707" y2="576.5" stroke="#f0f0f0"/><line x1="432" y1="626.5" x2="707" y2="626.5" stroke="#f0f0f0"/><text filter="url(#crisp2)" x="435.5" y="386.0" text-anchor="end" font-family="Liberation Sans" font-size="10" letter-spacing="1.0" fill="#fff">500.0</text><text filter="url(#crisp2)" x="435.5" y="430.5" text-anchor="end" font-family="Liberation Sans" font-size="10" letter-spacing="1.0" fill="#fff">400.0</text><text filter="url(#crisp2)" x="435.5" y="480.5" text-anchor="end" font-family="Liberation Sans" font-size="10" letter-spacing="1.0" fill="#fff">300.0</text><text filter="url(#crisp2)" x="435.5" y="530.5" text-anchor="end" font-family="Liberation Sans" font-size="10" letter-spacing="1.0" fill="#fff">200.0</text><text filter="url(#crisp2)" x="435.5" y="580.5" text-anchor="end" font-family="Liberation Sans" font-size="10" letter-spacing="1.0" fill="#fff">100.0</text><text filter="url(#crisp2)" x="435.5" y="626.0" text-anchor="end" font-family="Liberation Sans" font-size="10" letter-spacing="1.0" fill="#fff">0.0</text></svg>
<div class="a" style="left:544px;top:67px;width:174px;height:166px;background:#000"></div>
<div class="a" style="left:549px;top:72px;width:164px;height:156px;background:#eeeeee;border:1px solid #fff"></div>
<div class="grp" style="left:557px;top:80px;width:72px;height:147px"></div>
<div class="a" style="left:561px;top:76px;width:64px;height:10px;background:#eeeeee"></div>
<div class="t b" style="left:563px;top:74px;">Voltage (...</div>
<div class="fld" style="left:564px;top:91px;width:60px"><span>9.5</span></div>
<div class="fld" style="left:564px;top:113px;width:60px"><span>10.5</span></div>
<div class="fld" style="left:564px;top:135px;width:60px"><span>12.5</span></div>
<div class="fld" style="left:564px;top:157px;width:60px"><span>13.5</span></div>
<div class="fld" style="left:564px;top:179px;width:60px"><span>14.4</span></div>
<div class="fld" style="left:564px;top:201px;width:60px"><span>17.9</span></div>
<div class="grp" style="left:634px;top:80px;width:72px;height:147px"></div>
<div class="a" style="left:638px;top:76px;width:16px;height:10px;background:#eeeeee"></div>
<div class="t b" style="left:643px;top:74px;">%</div>
<div class="fld" style="left:641px;top:91px;width:60px"><span>160.0</span></div>
<div class="fld" style="left:641px;top:113px;width:60px"><span>140.4</span></div>
<div class="fld" style="left:641px;top:135px;width:60px"><span>109.0</span></div>
<div class="fld" style="left:641px;top:157px;width:60px"><span>100.0</span></div>
<div class="fld" style="left:641px;top:179px;width:60px"><span>91.0</span></div>
<div class="fld" style="left:641px;top:201px;width:60px"><span>70.3</span></div>
<div class="a" style="left:728px;top:47px;width:16px;height:397px;background:#eeeeee;border-left:1px solid #7a8a99;border-right:1px solid #7a8a99"></div><div class="a" style="left:728px;top:47px;width:16px;height:16px;border:1px solid #7a8a99;border-top:0;background:#eeeeee;box-shadow:inset 1px 1px 0 #fff"></div><svg class="a" style="left:728px;top:47px" width="16" height="16"><path d="M3.5 9 L12.5 9 L8 4.5 Z" fill="#222"/></svg><div class="a" style="left:728px;top:62px;width:16px;height:237px;border:1px solid #6382bf;border-right-color:#7a8a99;background:linear-gradient(to right,#dde8f3,#ffffff 30%,#b8cfe5)"></div><div class="a" style="left:732px;top:178px;width:9px;height:1px;background:#6382bf;box-shadow:1px 1px 0 #fff"></div><div class="a" style="left:732px;top:180px;width:9px;height:1px;background:#6382bf;box-shadow:1px 1px 0 #fff"></div><div class="a" style="left:732px;top:182px;width:9px;height:1px;background:#6382bf;box-shadow:1px 1px 0 #fff"></div><div class="a" style="left:728px;top:428px;width:16px;height:16px;border:1px solid #7a8a99;background:#eeeeee;box-shadow:inset 1px 1px 0 #fff"></div><svg class="a" style="left:728px;top:428px" width="16" height="16"><path d="M3.5 7 L12.5 7 L8 11.5 Z" fill="#222"/></svg><div class="a" style="left:3px;top:444px;width:725px;height:16px;background:#eeeeee;border-top:1px solid #7a8a99;border-bottom:1px solid #7a8a99"></div><div class="a" style="left:3px;top:444px;width:16px;height:16px;border-top:1px solid #7a8a99;border-bottom:1px solid #7a8a99;border-right:1px solid #7a8a99;background:#eeeeee;box-shadow:inset 1px 1px 0 #fff"></div><svg class="a" style="left:3px;top:444px" width="16" height="16"><path d="M9 3.5 L9 12.5 L4.5 8 Z" fill="#222"/></svg><div class="a" style="left:18px;top:444px;width:466px;height:16px;border:1px solid #6382bf;border-bottom-color:#7a8a99;background:linear-gradient(#dde8f3,#ffffff 30%,#b8cfe5)"></div><div class="a" style="left:249px;top:448px;width:1px;height:9px;background:#6382bf;box-shadow:1px 1px 0 #fff"></div><div class="a" style="left:251px;top:448px;width:1px;height:9px;background:#6382bf;box-shadow:1px 1px 0 #fff"></div><div class="a" style="left:253px;top:448px;width:1px;height:9px;background:#6382bf;box-shadow:1px 1px 0 #fff"></div><div class="a" style="left:712px;top:444px;width:16px;height:16px;border:1px solid #7a8a99;background:#eeeeee;box-shadow:inset 1px 1px 0 #fff"></div><svg class="a" style="left:712px;top:444px" width="16" height="16"><path d="M7 3.5 L7 12.5 L11.5 8 Z" fill="#222"/></svg><div class="a" style="left:728px;top:444px;width:16px;height:16px;border:1px solid #7a8a99;border-left:0;background:#eeeeee"></div>
<div class="a" style="left:470px;top:466px;width:66px;height:32px;border:1px solid #9a9a9a;background:#eeeeee"></div>
<svg class="a" style="left:482px;top:466px" width="40" height="31" viewBox="0 0 40 31"><path d="M10 5 L10 15.5 L20.5 15.5 L17.5 12.8 C20.5 12.5 23.5 15 23 21 L26.5 26 L32 26.5 L32 17 C31.5 9.5 26 5.5 19.5 5.5 L12 6.5 Z" fill="#cacaca" stroke="#bcbcbc" stroke-width="0.8"/></svg>
<div class="btnb" style="left:538px"></div>
<svg class="a" style="left:550px;top:466px" width="40" height="31" viewBox="0 0 40 31"><path d="M10.7 24.8 C9.6 18.5 10.5 9.5 18.4 5.6 L28.5 5.2 L28.5 15.3 L20.2 15.3 L22 11.6 C19 11 16 13 15 17 C14.6 19.5 14.8 21.8 12.6 24.8 Z" fill="#ddd3b8" transform="translate(2,2)"/><path d="M10.7 24.8 C9.6 18.5 10.5 9.5 18.4 5.6 L28.5 5.2 L28.5 15.3 L20.2 15.3 L22 11.6 C19 11 16 13 15 17 C14.6 19.5 14.8 21.8 12.6 24.8 Z" fill="#2c5fc0" stroke="#1a44a8" stroke-width="0.8"/><path d="M12.2 11 C13.5 8 15.8 6.8 19 6.6 L27.3 6.4 L27.3 8.6 L19 8.9 C16.5 9.1 14.5 10.2 13 12.5 Z" fill="#a8c8f4" opacity="0.75"/></svg>
<div class="btnb" style="left:606px"></div>
<div class="t b" style="left:606px;top:476px;width:66px;text-align:center"><u style="text-decoration-thickness:1px;text-underline-offset:1px">B</u>urn</div>
<div class="btnb" style="left:674px"></div>
<div class="t b" style="left:674px;top:476px;width:66px;text-align:center"><u style="text-decoration-thickness:1px;text-underline-offset:1px">C</u>lose</div>
</body></html>
